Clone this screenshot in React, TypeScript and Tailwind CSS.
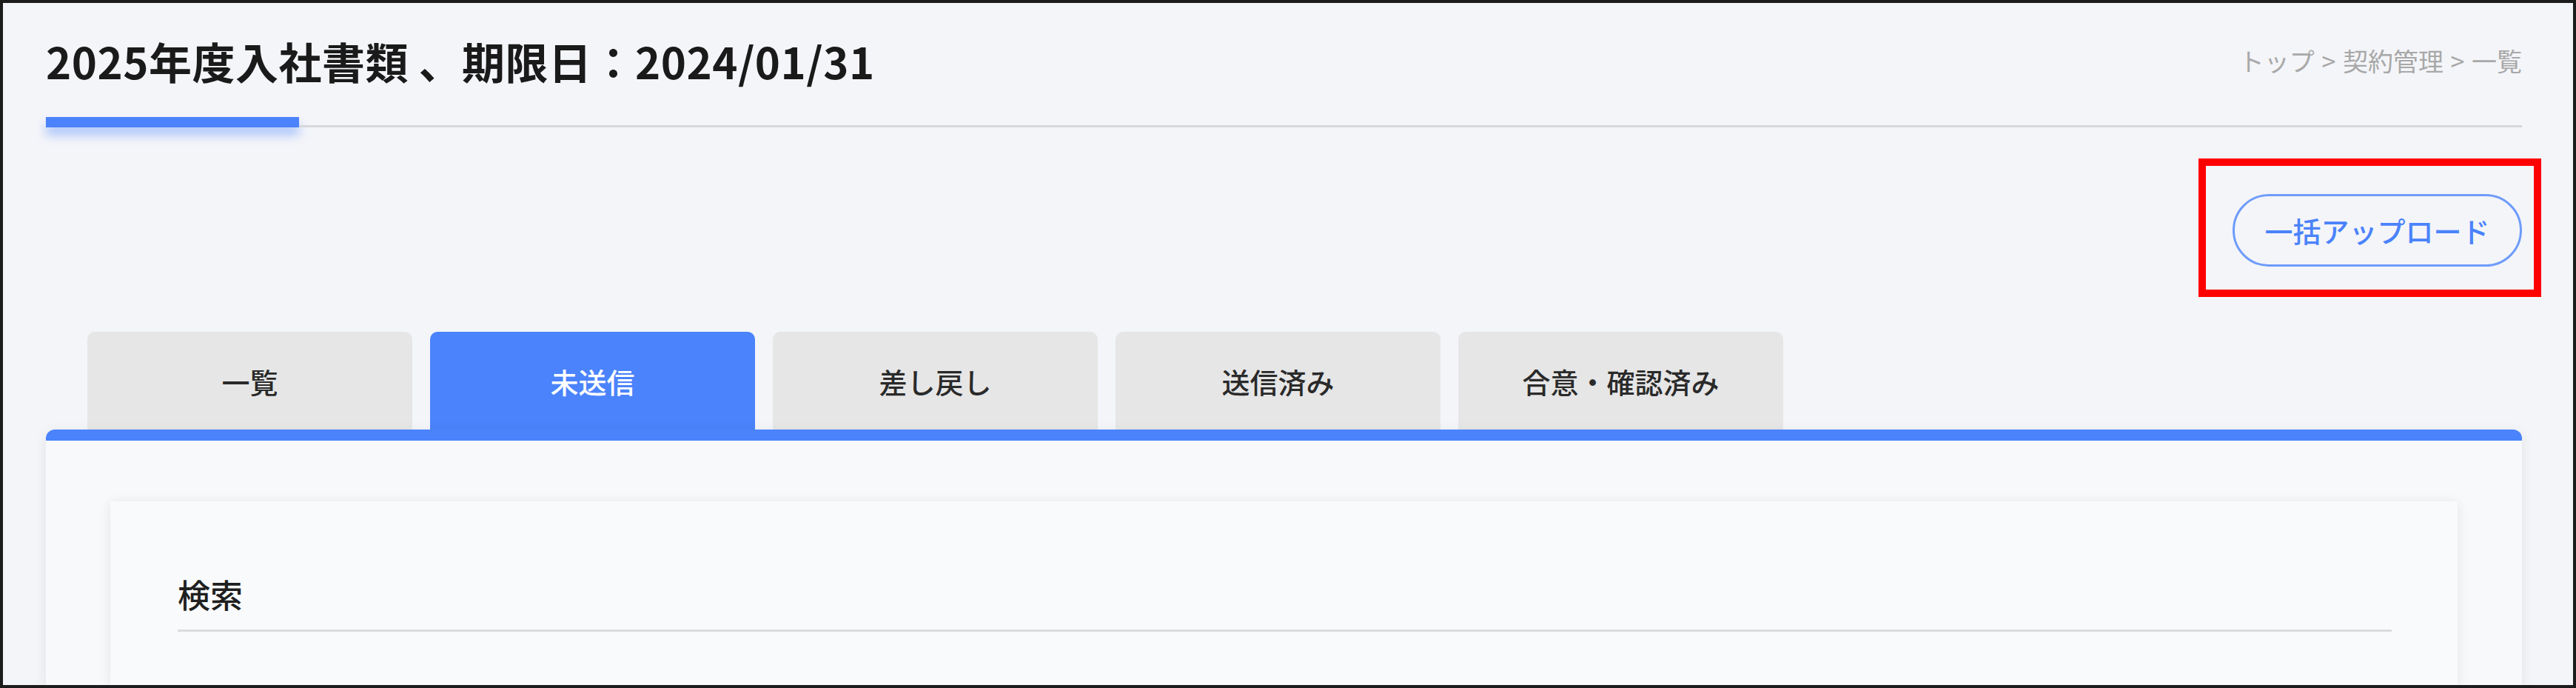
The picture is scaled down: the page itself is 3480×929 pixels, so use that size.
import React from "react";

const tabs = ["一覧", "未送信", "差し戻し", "送信済み", "合意・確認済み"];
const activeTab = 1;

function App() {
  return (
    <div
      className="w-[3480px] h-[929px] overflow-hidden border-4 border-[#1c1c1c] bg-[#f4f5f9] flex flex-col text-[#1a1a1a]"
      style={{ fontFamily: '"Noto Sans CJK JP", "Noto Sans", sans-serif' }}
    >
      <div className="pl-[58px] pr-[69px] flex flex-col flex-1 min-h-0">
        {/* Header */}
        <div className="mt-[34px] h-[87px] flex items-center justify-between">
          <h1 className="text-[58px] font-bold leading-none tracking-[0.5px]">
            2025年度入社書類 、期限日：2024/01/31
          </h1>
          <nav className="text-[34px] text-[#a8a8a8] leading-none [word-spacing:2px]">
            トップ &gt; 契約管理 &gt; 一覧
          </nav>
        </div>

        {/* Underline */}
        <div className="mt-[33px] flex items-end h-[14px]">
          <div className="w-[342px] h-[14px] bg-[#4a83fb] shadow-[0_10px_14px_rgba(74,131,251,0.45)]" />
          <div className="flex-1 h-[3px] bg-[#d6d7dc]" />
        </div>

        {/* Action */}
        <div className="mt-[90px] flex justify-end">
          <div className="relative">
            <button className="w-[391px] h-[98px] rounded-full border-[3px] border-[#6e9cfa] text-[#4a83fb] text-[38px] font-medium leading-none">
              一括アップロード
            </button>
            <div className="absolute left-[-46px] right-[-26px] top-[-48px] bottom-[-41px] border-[10px] border-[#ff0000] pointer-events-none" />
          </div>
        </div>

        {/* Tabs */}
        <div className="mt-[88px] ml-[56px] flex gap-[24px]">
          {tabs.map((t, i) => (
            <div
              key={t}
              className={
                i === activeTab
                  ? "w-[439px] h-[132px] rounded-t-[10px] bg-[#4a83fb] text-white text-[38px] font-medium flex items-center justify-center"
                  : "w-[439px] h-[132px] rounded-t-[10px] bg-[#e6e6e6] text-[#2a2a2a] text-[38px] font-medium flex items-center justify-center"
              }
            >
              {t}
            </div>
          ))}
        </div>

        {/* Panel */}
        <div className="flex-1 rounded-t-[12px] border-t-[15px] border-[#4a83fb] bg-[#f8f9fb] shadow-[0_4px_18px_rgba(0,0,0,0.08)] px-[87px] pt-[82px]">
          <div className="h-full bg-[#f9fafb] shadow-[0_2px_16px_rgba(0,0,0,0.09)] pl-[91px] pr-[89px] pt-[92px]">
            <h2 className="text-[44px] font-medium leading-[1.5] text-[#1f1f1f]">検索</h2>
            <div className="mt-[15px] h-[3px] bg-[#dcdcdc]" />
          </div>
        </div>
      </div>
    </div>
  );
}

export default App;
